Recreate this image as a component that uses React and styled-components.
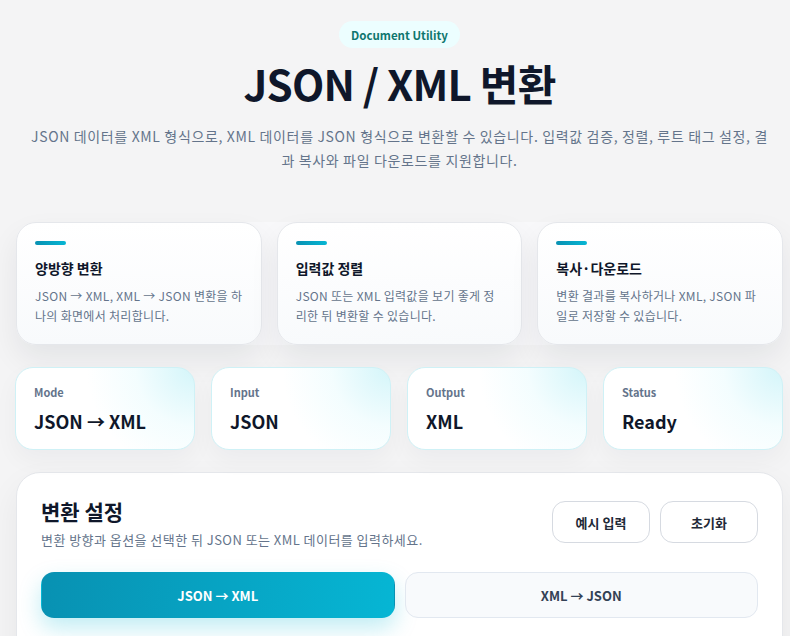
import React from "react";
import styled, { createGlobalStyle } from "styled-components";

const Global = createGlobalStyle`
  html, body { margin: 0; padding: 0; background: #f4f4f5; }
  body { font-family: "Noto Sans CJK KR", "Noto Sans", sans-serif; color: #0f172a; }
  * { box-sizing: border-box; }
`;

const Page = styled.div`
  padding: 21px 7px 0 16px;
  overflow: hidden;
  height: 636px;
`;

const Hero = styled.header`
  display: flex;
  flex-direction: column;
  align-items: center;
  text-align: center;
`;

const Badge = styled.span`
  display: inline-flex;
  align-items: center;
  height: 27px;
  padding: 0 12px;
  border-radius: 999px;
  background: #ecfeff;
  color: #0f766e;
  font-size: 11.5px;
  font-weight: 600;
`;

const Title = styled.h1`
  margin: 8px 0 0;
  font-size: 42px;
  line-height: 54px;
  font-weight: 700;
  letter-spacing: -0.8px;
  color: #0f172a;
`;

const Lead = styled.p`
  margin: 14px 0 0;
  max-width: 738px;
  font-size: 14px;
  line-height: 24px;
  letter-spacing: 0.65px;
  color: #64748b;
`;

const FeatureRow = styled.section`
  margin-top: 50px;
  display: grid;
  grid-template-columns: repeat(3, 1fr);
  gap: 15px;
  background: #f8f8fa;
  border-radius: 20px;
`;

const FeatureCard = styled.article`
  height: 123px;
  padding: 18px 16px 18px 18px;
  border-radius: 20px;
  border: 1px solid #e5e7eb;
  background: linear-gradient(180deg, #ffffff 0%, #f8fafc 100%);
  box-shadow: 0 14px 30px rgba(15, 23, 42, 0.07);
`;

const Accent = styled.div`
  width: 31px;
  height: 4px;
  border-radius: 4px;
  background: linear-gradient(90deg, #0891b2, #06b6d4);
`;

const FeatureTitle = styled.h3`
  margin: 13px 0 0;
  font-size: 14px;
  line-height: 20px;
  font-weight: 700;
  color: #0f172a;
`;

const FeatureText = styled.p`
  margin: 8px 0 0;
  font-size: 12px;
  line-height: 20px;
  letter-spacing: 0.3px;
  color: #64748b;
`;

const StatRow = styled.section`
  margin-top: 22px;
  margin-left: -1px;
  display: grid;
  grid-template-columns: repeat(4, 1fr);
  gap: 16px;
`;

const StatCard = styled.div`
  height: 83px;
  padding: 17px 18px;
  border-radius: 18px;
  border: 1px solid #cff1f6;
  background:
    radial-gradient(circle at 100% 0%, rgba(207, 244, 249, 0.9) 0%, rgba(236, 252, 254, 0.6) 30%, rgba(255,255,255,0) 55%),
    #ffffff;
  box-shadow: 0 10px 24px rgba(15, 23, 42, 0.04);
`;

const StatLabel = styled.div`
  font-size: 11px;
  line-height: 14px;
  font-weight: 600;
  color: #64748b;
`;

const StatValue = styled.div`
  margin-top: 10px;
  font-size: 18px;
  line-height: 24px;
  font-weight: 700;
  color: #0f172a;
`;

const Panel = styled.section`
  margin-top: 22px;
  padding: 24px 24px 0 24px;
  border-radius: 24px;
  border: 1px solid #e5e7eb;
  background: #ffffff;
  box-shadow: 0 14px 34px rgba(15, 23, 42, 0.06);
  height: 200px;
`;

const PanelHead = styled.div`
  display: flex;
  justify-content: space-between;
  align-items: flex-start;
`;

const PanelTitle = styled.h2`
  margin: 0;
  font-size: 21px;
  line-height: 28px;
  font-weight: 700;
  color: #0f172a;
`;

const PanelSub = styled.p`
  margin: 5px 0 0;
  font-size: 13px;
  line-height: 20px;
  letter-spacing: 0.45px;
  color: #64748b;
`;

const Actions = styled.div`
  display: flex;
  gap: 10px;
  margin-top: 4px;
`;

const GhostButton = styled.button`
  width: 98px;
  height: 42px;
  border-radius: 13px;
  border: 1px solid #d6dae1;
  background: #ffffff;
  font-family: inherit;
  font-size: 13px;
  font-weight: 600;
  color: #1f2937;
`;

const ModeRow = styled.div`
  margin-top: 22px;
  display: grid;
  grid-template-columns: 1fr 1fr;
  gap: 10px;
`;

const ModeButton = styled.button`
  height: 46px;
  border-radius: 13px;
  font-family: inherit;
  font-size: 13px;
  font-weight: 700;
  border: 1px solid ${(p) => (p.$active ? "transparent" : "#e2e8f0")};
  color: ${(p) => (p.$active ? "#ffffff" : "#334155")};
  background: ${(p) =>
    p.$active ? "linear-gradient(100deg, #0891b2 0%, #06b6d4 100%)" : "#f8fafc"};
  box-shadow: ${(p) => (p.$active ? "0 10px 22px rgba(6, 182, 212, 0.25)" : "none")};
`;

const features = [
  { t: "양방향 변환", d: "JSON → XML, XML → JSON 변환을 하나의 화면에서 처리합니다." },
  { t: "입력값 정렬", d: "JSON 또는 XML 입력값을 보기 좋게 정리한 뒤 변환할 수 있습니다." },
  { t: "복사·다운로드", d: "변환 결과를 복사하거나 XML, JSON 파일로 저장할 수 있습니다." },
];

const stats = [
  { l: "Mode", v: "JSON → XML" },
  { l: "Input", v: "JSON" },
  { l: "Output", v: "XML" },
  { l: "Status", v: "Ready" },
];

export default function App() {
  return (
    <>
      <Global />
      <Page>
        <Hero>
          <Badge>Document Utility</Badge>
          <Title>JSON / XML 변환</Title>
          <Lead>
            JSON 데이터를 XML 형식으로, XML 데이터를 JSON 형식으로 변환할 수 있습니다. 입력값 검증, 정렬, 루트 태그 설정, 결과 복사와 파일 다운로드를 지원합니다.
          </Lead>
        </Hero>
        <FeatureRow>
          {features.map((f) => (
            <FeatureCard key={f.t}>
              <Accent />
              <FeatureTitle>{f.t}</FeatureTitle>
              <FeatureText>{f.d}</FeatureText>
            </FeatureCard>
          ))}
        </FeatureRow>
        <StatRow>
          {stats.map((s) => (
            <StatCard key={s.l}>
              <StatLabel>{s.l}</StatLabel>
              <StatValue>{s.v}</StatValue>
            </StatCard>
          ))}
        </StatRow>
        <Panel>
          <PanelHead>
            <div>
              <PanelTitle>변환 설정</PanelTitle>
              <PanelSub>변환 방향과 옵션을 선택한 뒤 JSON 또는 XML 데이터를 입력하세요.</PanelSub>
            </div>
            <Actions>
              <GhostButton>예시 입력</GhostButton>
              <GhostButton>초기화</GhostButton>
            </Actions>
          </PanelHead>
          <ModeRow>
            <ModeButton $active>JSON → XML</ModeButton>
            <ModeButton>XML → JSON</ModeButton>
          </ModeRow>
        </Panel>
      </Page>
    </>
  );
}
